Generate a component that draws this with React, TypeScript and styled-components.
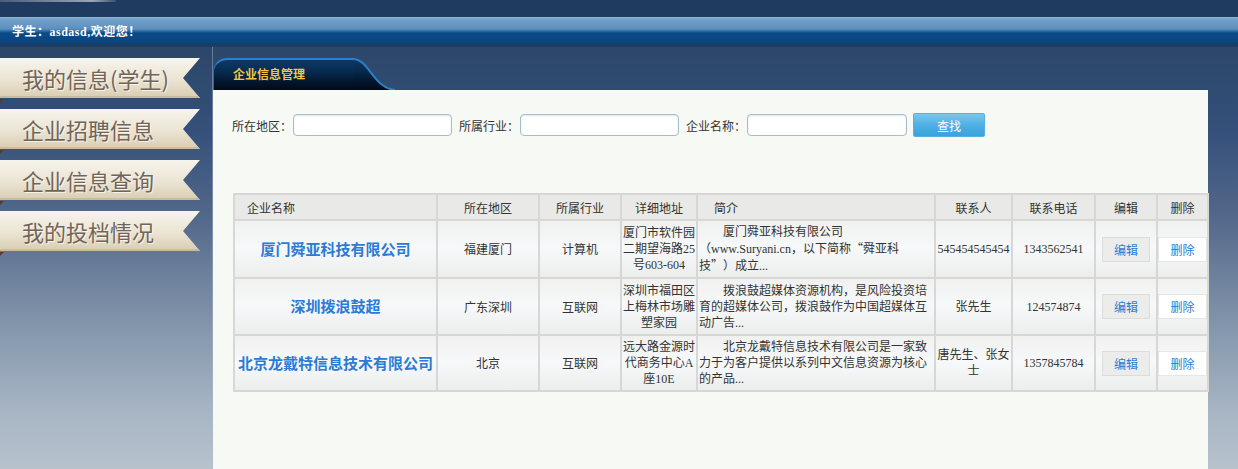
import React from 'react'
import styled, { createGlobalStyle } from 'styled-components'

const GlobalStyle = createGlobalStyle`
  html, body {
    margin: 0;
    padding: 0;
  }
  body {
    font-family: 'Noto Sans CJK SC', 'Noto Sans', sans-serif;
    background: #1e3a5e;
  }
`

const Page = styled.div`
  width: 1238px;
  height: 469px;
  display: flex;
  flex-direction: column;
  overflow: hidden;
`

const TopStrip = styled.div`
  position: relative;
  height: 17px;
  flex: none;
  background: #1f3b5f;
  &::before {
    content: '';
    position: absolute;
    left: 0;
    top: 0;
    width: 116px;
    height: 2px;
    background: linear-gradient(to right, #4a5e78, #9aa7b8 80%, #3a506c);
  }
`

const WelcomeBar = styled.div`
  height: 30px;
  flex: none;
  padding-left: 12px;
  background: linear-gradient(
    to bottom,
    #93b8d6 0,
    #74a2c9 2px,
    #5d8fbd 12px,
    #2d6ca5 14px,
    #0c4a87 16px,
    #0a4680 25px,
    #183b63 27px,
    #213f66 30px
  );
  color: #fff;
  font-family: 'Liberation Serif', 'Noto Sans CJK SC', serif;
  font-weight: bold;
  font-size: 12px;
  letter-spacing: 0.5px;
  line-height: 30px;
`

const Main = styled.div`
  flex: 1;
  display: flex;
  background: linear-gradient(
    to bottom,
    #2c4769 0%,
    #35507a 20%,
    #52688a 40%,
    #6f829d 55%,
    #8a9cb0 70%,
    #a5b3c3 85%,
    #b7c2cc 100%
  );
`

const Sidebar = styled.nav`
  width: 212px;
  flex: none;
  padding-top: 11px;
  display: flex;
  flex-direction: column;
  gap: 11px;
  border-right: 1px solid rgba(170, 185, 205, 0.45);
`

const Ribbon = styled.div`
  width: 200px;
  height: 40px;
  box-sizing: border-box;
  padding-left: 22px;
  line-height: 40px;
  font-size: 22px;
  color: #716458;
  text-shadow: 1px 1px 0 rgba(255, 255, 255, 0.7);
  white-space: nowrap;
  background: linear-gradient(to bottom, #f7f4ec 0%, #ebe4d3 55%, #d9cdb1 100%);
  clip-path: polygon(0 0, 100% 0, 91.5% 50%, 100% 100%, 0 100%);
  box-shadow: inset 0 -2px 0 #c9bc9c;
  cursor: pointer;
`

const RibbonWrap = styled.div`
  position: relative;
  &::after {
    content: '';
    position: absolute;
    left: 0;
    bottom: -5px;
    border-left: 4px solid #5a3a2a;
    border-bottom: 4px solid transparent;
  }
`

const Content = styled.div`
  width: 995px;
  flex: none;
  padding-top: 11px;
  display: flex;
  flex-direction: column;
`

const TabRow = styled.div`
  height: 32px;
  flex: none;
  display: flex;
`

const Tab = styled.div`
  width: 140px;
  box-sizing: border-box;
  padding-left: 19px;
  border-top: 2px solid #2f7fc8;
  border-left: 1px solid #2a6aa8;
  border-radius: 14px 0 0 0;
  background: linear-gradient(to bottom, #0d3a68 0%, #072a4e 40%, #03152b 75%, #010a16 100%);
  color: #f3c648;
  font-size: 12px;
  font-weight: bold;
  line-height: 28px;
`

const TabCurve = styled.svg`
  display: block;
  width: 42px;
  height: 32px;
`

const Panel = styled.div`
  flex: 1;
  background: #f7f9f5;
  padding: 23px 0 0 19px;
`

const SearchRow = styled.div`
  display: flex;
  align-items: center;
  height: 24px;
`

const Label = styled.span`
  font-size: 12px;
  color: #333;
  white-space: nowrap;
`

const Input = styled.input<{ $w: number }>`
  width: ${(p) => p.$w}px;
  height: 22px;
  box-sizing: border-box;
  margin: 0 7px 0 1px;
  border: 1px solid #a5bccd;
  border-radius: 4px;
  background: #fff;
  box-shadow: inset 0 1px 2px rgba(0, 40, 80, 0.12);
  outline: none;
`

const SearchButton = styled.button`
  width: 72px;
  height: 24px;
  margin-left: -1px;
  border: 1px solid #57b0e2;
  border-radius: 2px;
  background: linear-gradient(to bottom, #7cc8ee 0%, #4fb0e4 50%, #3aa2dc 100%);
  color: #fff;
  font-family: 'Noto Sans CJK SC', sans-serif;
  font-size: 12px;
  padding: 0;
`

const Table = styled.table`
  margin: 56px 0 0 1px;
  width: 974px;
  table-layout: fixed;
  border-collapse: collapse;
  border: 2px solid #d7d8d6;
`

const Th = styled.th<{ $left?: number }>`
  height: 24px;
  padding: 0 0 0 ${(p) => p.$left ?? 0}px;
  border: 2px solid #d7d8d6;
  background: #e9e9e7;
  font-size: 12px;
  font-weight: normal;
  color: #333;
  text-align: ${(p) => (p.$left ? 'left' : 'center')};
`

const Tr = styled.tr<{ $h: number }>`
  height: ${(p) => p.$h}px;
  background: linear-gradient(to bottom, #f0f1ef 0%, #f6f8f9 45%, #f4f6f7 60%, #eceeec 100%);
`

const Td = styled.td<{ $kind?: 'intro' | 'serif' }>`
  border: 2px solid #d7d8d6;
  padding: ${(p) => (p.$kind === 'intro' ? '0 7px 0 1px' : '0')};
  font-size: 12px;
  line-height: 16px;
  color: #333;
  text-align: ${(p) => (p.$kind === 'intro' ? 'left' : 'center')};
  text-indent: ${(p) => (p.$kind === 'intro' ? '24px' : '0')};
  font-family: ${(p) =>
    p.$kind === 'serif' || p.$kind === 'intro'
      ? "'Liberation Serif', 'Noto Sans CJK SC', serif"
      : "'Noto Sans CJK SC', sans-serif"};
`

const Quote = styled.span<{ $open?: boolean }>`
  display: inline-block;
  width: 12px;
  text-indent: 0;
  text-align: ${(p) => (p.$open ? 'right' : 'left')};
  font-family: 'Noto Sans CJK SC', sans-serif;
`

const Keep = styled.span`
  white-space: nowrap;
`

const NameLink = styled.a`
  color: #2a7bd6;
  font-size: 15px;
  font-weight: bold;
  text-decoration: none;
  white-space: nowrap;
`

const ActionLink = styled.a<{ $tone: 'grey' | 'white' }>`
  display: block;
  margin: 0 auto;
  width: ${(p) => (p.$tone === 'grey' ? 48 : 49)}px;
  height: 25px;
  box-sizing: border-box;
  line-height: 23px;
  border: 1px solid ${(p) => (p.$tone === 'grey' ? '#dcdcdc' : '#e6e6e6')};
  background: ${(p) => (p.$tone === 'grey' ? '#ececeb' : '#ffffff')};
  color: #2a7bd6;
  font-size: 12px;
  text-decoration: none;
`

const menu = ['我的信息(学生)', '企业招聘信息', '企业信息查询', '我的投档情况']

const rows = [
  {
    h: 58,
    name: '厦门舜亚科技有限公司',
    area: '福建厦门',
    trade: '计算机',
    addr: '厦门市软件园二期望海路25号603-604',
    intro: (
      <>
        厦门舜亚科技有限公司（www.Suryani.cn，以下简称<Quote $open>“</Quote>舜亚科
        <Keep>
          技<Quote>”</Quote>）
        </Keep>
        成立...
      </>
    ),
    contact: '545454545454',
    phone: '1343562541',
  },
  {
    h: 57,
    name: '深圳拨浪鼓超',
    area: '广东深圳',
    trade: '互联网',
    addr: '深圳市福田区上梅林市场雕塑家园',
    intro: <>拨浪鼓超媒体资源机构，是风险投资培育的超媒体公司，拨浪鼓作为中国超媒体互动广告...</>,
    contact: '张先生',
    phone: '124574874',
  },
  {
    h: 56,
    name: '北京龙戴特信息技术有限公司',
    area: '北京',
    trade: '互联网',
    addr: '远大路金源时代商务中心A座10E',
    intro: <>北京龙戴特信息技术有限公司是一家致力于为客户提供以系列中文信息资源为核心的产品...</>,
    contact: '唐先生、张女士',
    phone: '1357845784',
  },
]

const cols = [203, 102, 82, 76, 238, 77, 83, 62, 51]

export default function App() {
  return (
    <Page>
      <GlobalStyle />
      <TopStrip />
      <WelcomeBar>学生：asdasd,欢迎您！</WelcomeBar>
      <Main>
        <Sidebar>
          {menu.map((m) => (
            <RibbonWrap key={m}>
              <Ribbon>{m}</Ribbon>
            </RibbonWrap>
          ))}
        </Sidebar>
        <Content>
          <TabRow>
            <Tab>企业信息管理</Tab>
            <TabCurve viewBox="0 0 42 32" preserveAspectRatio="none">
              <defs>
                <linearGradient id="tabg" x1="0" y1="0" x2="0" y2="1">
                  <stop offset="0" stopColor="#0d3a68" />
                  <stop offset="0.4" stopColor="#072a4e" />
                  <stop offset="0.75" stopColor="#03152b" />
                  <stop offset="1" stopColor="#010a16" />
                </linearGradient>
              </defs>
              <path d="M0 0 C16 0 20 30 42 32 L0 32 Z" fill="url(#tabg)" />
              <path d="M0 1 C16 1 20 30 42 32" fill="none" stroke="#2f7fc8" strokeWidth="2" />
            </TabCurve>
          </TabRow>
          <Panel>
            <SearchRow>
              <Label>所在地区：</Label>
              <Input $w={159} />
              <Label>所属行业：</Label>
              <Input $w={159} />
              <Label>企业名称：</Label>
              <Input $w={160} />
              <SearchButton>查找</SearchButton>
            </SearchRow>
            <Table>
              <colgroup>
                {cols.map((w, i) => (
                  <col key={i} style={{ width: w }} />
                ))}
              </colgroup>
              <thead>
                <tr>
                  <Th $left={12}>企业名称</Th>
                  <Th>所在地区</Th>
                  <Th>所属行业</Th>
                  <Th>详细地址</Th>
                  <Th $left={16}>简介</Th>
                  <Th>联系人</Th>
                  <Th>联系电话</Th>
                  <Th>编辑</Th>
                  <Th>删除</Th>
                </tr>
              </thead>
              <tbody>
                {rows.map((r) => (
                  <Tr key={r.name} $h={r.h}>
                    <Td>
                      <NameLink href="#">{r.name}</NameLink>
                    </Td>
                    <Td>{r.area}</Td>
                    <Td>{r.trade}</Td>
                    <Td $kind="serif">{r.addr}</Td>
                    <Td $kind="intro">{r.intro}</Td>
                    <Td $kind="serif">{r.contact}</Td>
                    <Td $kind="serif">{r.phone}</Td>
                    <Td>
                      <ActionLink href="#" $tone="grey">编辑</ActionLink>
                    </Td>
                    <Td>
                      <ActionLink href="#" $tone="white">删除</ActionLink>
                    </Td>
                  </Tr>
                ))}
              </tbody>
            </Table>
          </Panel>
        </Content>
      </Main>
    </Page>
  )
}
